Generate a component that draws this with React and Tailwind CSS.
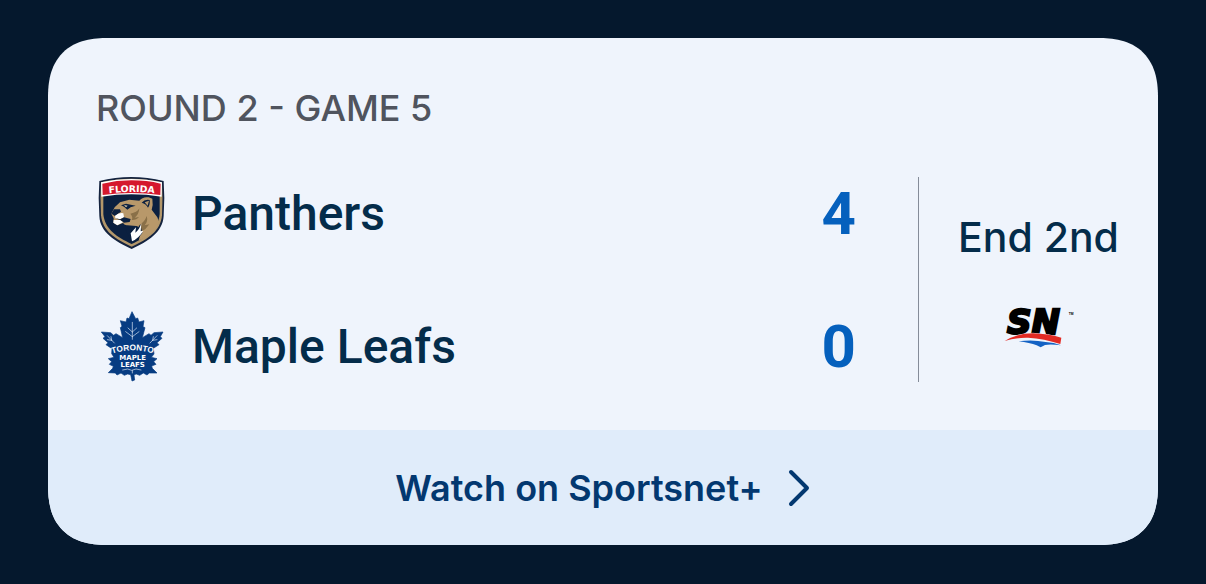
function PanthersLogo() {
  return (
    <svg viewBox="18 21 216 216" className="size-[72px] shrink-0" role="img" aria-label="Florida Panthers">
      {/* shield */}
      <path
        d="M28 33 Q76 21 124 21 Q172 21 221 33 Q225 84 221 138 C218 188 174 214 125 237 C76 214 30 188 28 138 Q24 84 28 33Z"
        fill="#14233f"
      />
      <path
        d="M33 37 Q78 26 124 26 Q171 26 216 37 Q219 84 216 136 C212 183 174 208 125 230 C76 208 37 183 33 136 Q30 84 33 37Z"
        fill="#b3976a"
      />
      <path
        d="M40 76 Q82 70 124 70 Q168 70 209 76 L209 132 C205 177 170 201 125 222 C80 201 44 177 40 132Z"
        fill="#0b2040"
      />
      <path d="M33 37 Q79 27 124 27 Q171 27 216 37 L215 80 Q169 73 124 73 Q80 73 34 80Z" fill="#fff" />
      <path d="M37 41 Q80 31 124 31 Q170 31 212 41 L211 75 Q168 69 124 69 Q82 69 38 75Z" fill="#d5182d" />
      <path id="florida-arc" d="M44 72 Q124 60 206 72" fill="none" />
      <text fill="#fff" fontFamily="DejaVu Sans" fontSize="28" fontWeight="700" textAnchor="middle">
        <textPath href="#florida-arc" startOffset="50%">FLORIDA</textPath>
      </text>
      {/* panther head */}
      <path
        d="M74 112 L90 97 L118 89 L148 92 Q158 79 176 82 L187 86 Q190 104 185 119 L202 142 Q210 158 201 170 Q178 200 146 212 L153 184 Q154 172 139 168 L112 166 Q104 167 99 159 L82 166 L70 158 L71 145 L64 131Z"
        fill="#b8986a"
      />
      {/* ear */}
      <path d="M155 98 Q164 87 179 90 Q181 104 174 113 Q168 101 155 98Z" fill="#0b2040" />
      <path d="M164 97 L177 92 L173 107Z" fill="#b8986a" />
      {/* brow and eye */}
      <path d="M93 106 L108 101 L137 107 L122 112 L112 119 L102 110Z" fill="#0b2040" />
      <path d="M102 105 L113 107 L108 112Z" fill="#e0cda8" />
      {/* muzzle */}
      <path d="M64 131 L72 118 L90 118 L93 125 L83 132 L76 139 Z" fill="#0b2040" />
      <path d="M75 137 Q88 126 100 130 L102 142 L89 148 L76 145Z" fill="#fff" />
      <path d="M76 145 L91 148 L102 142 L122 147 L119 156 L102 158 L92 151Z" fill="#0b2040" />
      <path d="M71 150 L90 150 L99 157 L82 166 L70 158Z" fill="#fff" />
      {/* cheek and neck */}
      <path d="M121 131 Q141 128 148 115 Q147 133 134 143 L147 141 Q139 151 125 150 Q130 141 121 131Z" fill="#8a7048" />
      <path d="M146 166 Q164 157 170 138 Q175 154 164 166 L178 163 Q168 178 156 184Z" fill="#8a7048" />
      <path d="M151 163 L137 184 L140 168 L125 184 L127 168 L107 179 L125 218 Q139 215 145 204 L157 189Z" fill="#0b2040" />
      <path d="M154 160 Q148 180 136 188 L138 172 L122 190 L126 214 Q147 204 160 182 L152 184Z" fill="#fff" />
    </svg>
  )
}

function LeafsLogo() {
  return (
    <svg viewBox="18 18 216 216" className="size-[72px] shrink-0" role="img" aria-label="Toronto Maple Leafs">
      <path
        d="M126 23 L137 44 L143 42 L147 54 L162 50 L159 68 L165 71 L157 101 L177 89 L183 94 L192 86 L219 84 L211 98 L216 103 L201 116 L207 122 L190 133 L192 150 L184 160 L201 164 L191 173 L198 181 L185 186 L187 193 L201 207 L178 207 L171 213 L160 207 L149 214 L139 210 L132 212 L134 228 L126 231 L122 212 L113 210 L103 214 L93 207 L81 213 L76 207 L55 206 L68 193 L70 187 L58 181 L65 173 L55 164 L72 160 L65 149 L66 134 L48 122 L54 116 L39 103 L45 98 L34 84 L62 86 L71 94 L78 89 L98 101 L91 71 L96 67 L91 50 L108 54 L111 42 L117 44Z"
        fill="#073c82"
        stroke="#073c82"
        strokeWidth="2"
        strokeLinejoin="round"
      />
      {/* veins */}
      <g fill="none" stroke="#dfeaf7" strokeWidth="2" strokeLinecap="round">
        <path d="M127 55 V106 M127 84 L114 72 M127 84 L140 72 M127 98 L107 83 M127 98 L147 83" />
        <path d="M52 95 L73 117 M65 109 L63 98 M65 109 L52 107" />
        <path d="M201 95 L180 117 M188 109 L190 98 M188 109 L201 107" />
        <path d="M98 198 L113 195 L125 199 L138 195 L153 198 M127 199 V207" />
      </g>
      <path id="toronto-arc" d="M66 149 Q127 129 190 149" fill="none" />
      <g fill="#fff" fontWeight="700" textAnchor="middle">
        <text fontFamily="Liberation Sans" fontSize="25">
          <textPath href="#toronto-arc" startOffset="50%">TORONTO</textPath>
        </text>
        <text x="128" y="168" fontFamily="DejaVu Sans" fontSize="21">MAPLE</text>
        <text x="128" y="189" fontFamily="DejaVu Sans" fontSize="21">LEAFS</text>
      </g>
    </svg>
  )
}

function SportsnetLogo() {
  return (
    <svg viewBox="36 36 216 120" className="h-10 w-[72px] overflow-visible" role="img" aria-label="Sportsnet">
      <text
        x="48"
        y="112"
        fontFamily="DejaVu Sans"
        fontSize="102"
        fontWeight="700"
        fontStyle="italic"
        stroke="#000"
        strokeWidth="7"
      >
        SN
      </text>
      <text x="233" y="53" fontFamily="Liberation Sans" fontSize="10" fontWeight="700">TM</text>
      <path
        d="M41 132 Q78 109 126 109 Q170 110 211 122 L208 141 Q159 125 111 122 Q77 121 41 132Z"
        fill="#e32a23"
        stroke="#eff4fc"
        strokeWidth="3"
        paintOrder="stroke"
      />
      <path d="M83 133 Q124 127 164 135 Q189 136 210 145 Q178 140 162 144 L149 151 L137 145 Q116 137 83 133Z" fill="#1462c4" />
    </svg>
  )
}

function Chevron() {
  return (
    <svg viewBox="0 0 24 40" className="h-10 w-6" fill="none" stroke="currentColor" strokeWidth="4" aria-hidden="true">
      <path d="M4 4 L20 20 L4 36" strokeLinecap="round" strokeLinejoin="round" />
    </svg>
  )
}

const teams = [
  { name: "Panthers",    score: 4, logo: PanthersLogo },
  { name: "Maple Leafs", score: 0, logo: LeafsLogo },
]

export default function App() {
  return (
    <main className="min-h-screen bg-[#05182d] px-12 pt-[38px] pb-[39px] font-['Inter',sans-serif]">
      <article className="overflow-hidden rounded-[60px] bg-[#eff4fc] [corner-shape:superellipse(1.3)]">
        <div className="px-12 pt-12 pb-12">
          <h2 className="text-[36px] leading-[44px] font-medium text-[#50545e]">ROUND 2 - GAME 5</h2>

          <div className="mt-[47px] -mr-12 flex">
            <ul className="flex grow flex-col gap-[61px] pr-[62px]">
              {teams.map(({ name, score, logo: Logo }) => (
                <li key={name} className="flex h-[72px] items-center font-['Roboto',sans-serif]">
                  <Logo />
                  <span className="ml-6 grow pt-0.5 text-[48px] leading-[56px] font-medium text-[#042c4a]">{name}</span>
                  <span className="pt-0.5 text-[60px] leading-[64px] font-bold text-[#0560bd]">{score}</span>
                </li>
              ))}
            </ul>

            {/* game status + broadcaster */}
            <div className="flex w-60 shrink-0 flex-col items-center justify-center gap-12 border-l border-[#858c99] pt-0.5">
              <span className="text-[41px] leading-[48px] font-medium whitespace-nowrap text-[#042c4a]">End 2nd</span>
              <SportsnetLogo />
            </div>
          </div>
        </div>

        <button
          type="button"
          className="flex h-[115px] w-full items-center justify-center gap-6 bg-[#e0ecfa] text-[36px] leading-[44px] font-semibold text-[#033870]"
        >
          Watch on Sportsnet+
          <Chevron />
        </button>
      </article>
    </main>
  )
}
